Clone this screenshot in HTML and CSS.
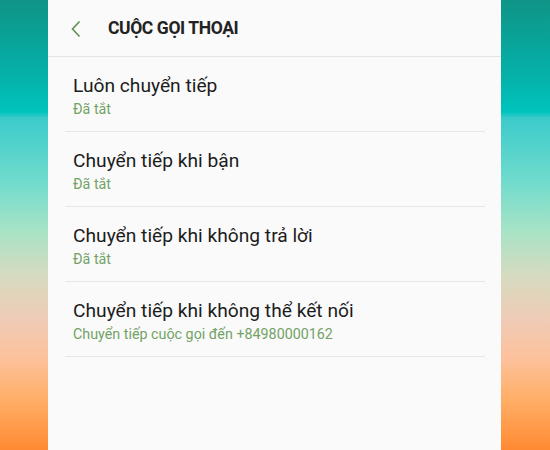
FILE: index.html
```html
<html>
<head>
<title>Cuộc gọi thoại</title>
<link rel="stylesheet" href="styles.css">
</head>
<body>
<div class="panel">
    <div class="header">
        <svg class="back" width="12" height="18" viewBox="0 0 12 18">
            <path d="M9.5 1.5 L2.5 9 L9.5 16.5" fill="none" stroke="#5f8f55" stroke-width="1.6"/>
        </svg>
        <h2 class="title">CUỘC GỌI THOẠI</h2>
    </div>

    <ul class="list">
        <li class="item">
            <div class="item-title">Luôn chuyển tiếp</div>
            <div class="item-sub">Đã tắt</div>
        </li>
        <li class="item">
            <div class="item-title">Chuyển tiếp khi bận</div>
            <div class="item-sub">Đã tắt</div>
        </li>
        <li class="item">
            <div class="item-title">Chuyển tiếp khi không trả lời</div>
            <div class="item-sub">Đã tắt</div>
        </li>
        <li class="item">
            <div class="item-title">Chuyển tiếp khi không thể kết nối</div>
            <div class="item-sub">Chuyển tiếp cuộc gọi đến +84980000162</div>
        </li>
    </ul>
</div>
</body>
</html>
```

FILE: styles.css
```css
body {
    margin: 0;
    padding: 0;
    height: 450px;
    overflow: hidden;
    font-family: Roboto, "Noto Sans", sans-serif;
    background: linear-gradient(to bottom,
        #0f9487 0px,
        #04b3ab 80px,
        #00c3be 112px,
        #3ccbca 118px,
        #6fdbcd 180px,
        #a6e3c6 230px,
        #d6dbc0 275px,
        #efcbb6 320px,
        #fdc19a 360px,
        #ffae66 400px,
        #ff8a32 450px);
}

.panel {
    margin-left: 48px;
    width: 453px;
    height: 450px;
    background: #fafafa;
}

.header {
    height: 56px;
    border-bottom: 1px solid #e4e4e4;
    display: flex;
    align-items: center;
}

.back {
    margin-left: 22px;
    margin-top: 1px;
}

.title {
    margin: 0 0 0 26px;
    font-size: 17.5px;
    font-weight: bold;
    color: #222;
    letter-spacing: -0.4px;
}

.list {
    list-style: none;
    margin: 0;
    padding: 0 16px 0 17px;
}

.item {
    border-bottom: 1px solid #e6e6e6;
    padding: 17px 0 0 8px;
    height: 57px;
}

.item-title {
    font-size: 19.2px;
    line-height: 24px;
    color: #1c1c1c;
}

.item-sub {
    margin-top: 2px;
    font-size: 14.3px;
    line-height: 18px;
    color: #72a266;
}
```
